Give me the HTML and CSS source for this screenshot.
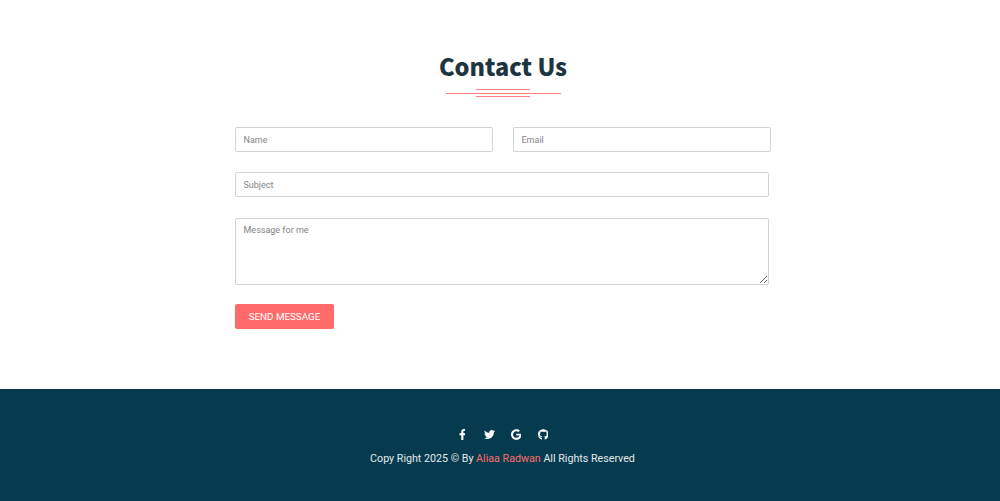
FILE: index.html
```html
<!DOCTYPE html>
<html lang="en">
<head>
<meta charset="utf-8">
<title>Contact Us</title>
<link rel="stylesheet" href="styles.css">
</head>
<body>
<main class="contact">
  <h1 class="title">Contact Us</h1>
  <div class="divider">
    <span class="line line-short"></span>
    <span class="line line-long"></span>
    <span class="line line-short"></span>
  </div>
  <form class="form">
    <div class="row">
      <input class="field field-half" type="text" placeholder="Name">
      <input class="field field-half" type="email" placeholder="Email">
    </div>
    <input class="field field-full" type="text" placeholder="Subject">
    <textarea class="field field-full field-area" placeholder="Message for me"></textarea>
    <button class="send" type="button">SEND MESSAGE</button>
  </form>
</main>
<footer class="footer">
  <div class="socials">
    <a class="social"><svg class="icon" viewBox="0 0 320 512"><path d="M279.14 288l14.22-92.66h-88.91v-60.13c0-25.35 12.42-50.06 52.24-50.06h40.42V6.26S260.43 0 225.36 0c-73.22 0-121.08 44.38-121.08 124.72v70.62H22.89V288h81.39v224h100.17V288z"/></svg></a>
    <a class="social"><svg class="icon" viewBox="0 0 512 512"><path d="M459.37 151.716c.325 4.548.325 9.097.325 13.645 0 138.72-105.583 298.558-298.558 298.558-59.452 0-114.68-17.219-161.137-47.106 8.447.974 16.568 1.299 25.34 1.299 49.055 0 94.213-16.568 130.274-44.832-46.132-.975-84.792-31.188-98.112-72.772 6.498.974 12.995 1.624 19.818 1.624 9.421 0 18.843-1.3 27.614-3.573-48.081-9.747-84.143-51.98-84.143-102.985v-1.299c13.969 7.797 30.214 12.67 47.431 13.319-28.264-18.843-46.781-51.005-46.781-87.391 0-19.492 5.197-37.36 14.294-52.954 51.655 63.675 129.3 105.258 216.365 109.807-1.624-7.797-2.599-15.918-2.599-24.04 0-57.828 46.782-104.934 104.934-104.934 30.213 0 57.502 12.67 76.67 33.137 23.715-4.548 46.456-13.32 66.599-25.34-7.798 24.366-24.366 44.833-46.132 57.827 21.117-2.273 41.584-8.122 60.426-16.243-14.292 20.791-32.161 39.308-52.628 54.253z"/></svg></a>
    <a class="social"><svg class="icon" viewBox="0 0 488 512"><path d="M488 261.8C488 403.3 391.1 504 248 504 110.8 504 0 393.2 0 256S110.8 8 248 8c66.8 0 123 24.5 166.3 64.9l-67.5 64.9C258.5 52.6 94.3 116.6 94.3 256c0 86.5 69.1 156.6 153.7 156.6 98.2 0 135-70.4 140.8-106.9H248v-85.3h236.1c2.3 12.7 3.9 24.9 3.9 41.4z"/></svg></a>
    <a class="social"><svg class="icon" viewBox="0 0 496 512"><path d="M165.9 397.4c0 2-2.3 3.6-5.2 3.6-3.3 0-5.6-1.6-5.6-3.6 0-2 2.3-3.6 5.2-3.6 3-.3 5.6 1.3 5.6 3.6zm-31.1-4.5c-.7 2 1.3 4.3 4.3 4.9 2.6 1 5.6 0 6.2-2s-1.3-4.3-4.3-5c-2.6-.7-5.5.3-6.2 2.1zm44.2-1.7c-2.9.7-4.9 2.6-4.6 4.9.3 2 2.9 3.3 5.9 2.6 2.9-.7 4.9-2.6 4.6-4.6-.3-1.9-3-3.2-5.9-2.9zM244.8 8C106.1 8 0 113.3 0 252c0 110.9 69.8 205.8 169.5 239.2 12.8 2.3 17.3-5.6 17.3-12.1 0-6.2-.3-40.4-.3-61.4 0 0-70 15-84.7-29.8 0 0-11.4-29.1-27.8-36.6 0 0-22.9-15.7 1.6-15.4 0 0 24.9 2 38.6 25.8 21.9 38.6 58.6 27.5 72.9 20.9 2.3-16 8.8-27.1 16-33.7-55.9-6.2-112.3-14.3-112.3-110.5 0-27.5 7.6-41.3 23.6-58.9-2.6-6.5-11.1-33.3 2.6-67.9 20.9-6.5 69 27 69 27 20-5.6 41.5-8.5 62.8-8.5s42.8 2.9 62.8 8.5c0 0 48.1-33.6 69-27 13.7 34.7 5.2 61.4 2.6 67.9 16 17.7 25.8 31.5 25.8 58.9 0 96.5-58.9 104.2-114.8 110.5 9.2 7.9 17 22.9 17 46.4 0 33.7-.3 75.4-.3 83.6 0 6.5 4.6 14.4 17.3 12.1C428.2 457.8 496 362.9 496 252 496 113.3 383.5 8 244.8 8z"/></svg></a>
  </div>
  <p class="copy">Copy Right 2025 © By <span class="author">Aliaa Radwan</span> All Rights Reserved</p>
</footer>
</body>
</html>
```

FILE: styles.css
```css
* {
  box-sizing: border-box;
}

html,
body {
  margin: 0;
  height: 501px;
  overflow: hidden;
  background: #fff;
  font-family: Roboto, sans-serif;
}

.contact {
  height: 389px;
  padding: 47px 0 0 6px;
  display: flex;
  flex-direction: column;
  align-items: center;
}

.title {
  margin: 0;
  height: 39px;
  font-family: "Noto Sans CJK SC", "Noto Sans", sans-serif;
  font-size: 23.5px;
  line-height: 39px;
  font-weight: 900;
  color: #1d3540;
}

.divider {
  margin-top: 3px;
  display: flex;
  flex-direction: column;
  align-items: center;
}

.line {
  display: block;
  height: 1px;
  background: #ff7f85;
}

.line-short {
  width: 54px;
}

.line-long {
  width: 115px;
  margin: 3px 0 2px;
}

.form {
  width: 536px;
  margin-top: 30px;
  display: flex;
  flex-direction: column;
  align-items: flex-start;
  gap: 20px;
}

.row {
  width: 100%;
  display: flex;
  gap: 20px;
}

.field {
  display: block;
  height: 25px;
  padding: 0 7.5px;
  border: 1px solid #ced4da;
  border-radius: 2px;
  background: #fff;
  font-family: Roboto, sans-serif;
  font-size: 9px;
  color: #495057;
  outline: none;
}

.field::placeholder {
  color: #858585;
  opacity: 1;
}

.field-half {
  flex: 1;
  min-width: 0;
}

.field-full {
  width: 534px;
}

.field-area {
  height: 67px;
  margin-top: 1px;
  padding: 6px 7.5px;
  line-height: 11px;
}

.send {
  width: 99px;
  height: 25px;
  margin-top: -1px;
  padding: 0;
  border: 0;
  border-radius: 2px;
  background: #ff6b6b;
  color: #fff;
  font-family: Roboto, sans-serif;
  font-size: 9.8px;
}

.footer {
  height: 112px;
  padding: 38px 0 0 5px;
  display: flex;
  flex-direction: column;
  align-items: center;
  background: #063b4f;
}

.socials {
  height: 14px;
  display: flex;
  gap: 15px;
}

.social {
  width: 12px;
  height: 14px;
  display: flex;
  align-items: center;
  justify-content: center;
}

.icon {
  height: 11px;
  fill: #fff;
}

.copy {
  margin: 11px 0 0;
  font-size: 10.7px;
  line-height: 14px;
  color: #e3e8ea;
}

.author {
  color: #ff6b6b;
}
```
